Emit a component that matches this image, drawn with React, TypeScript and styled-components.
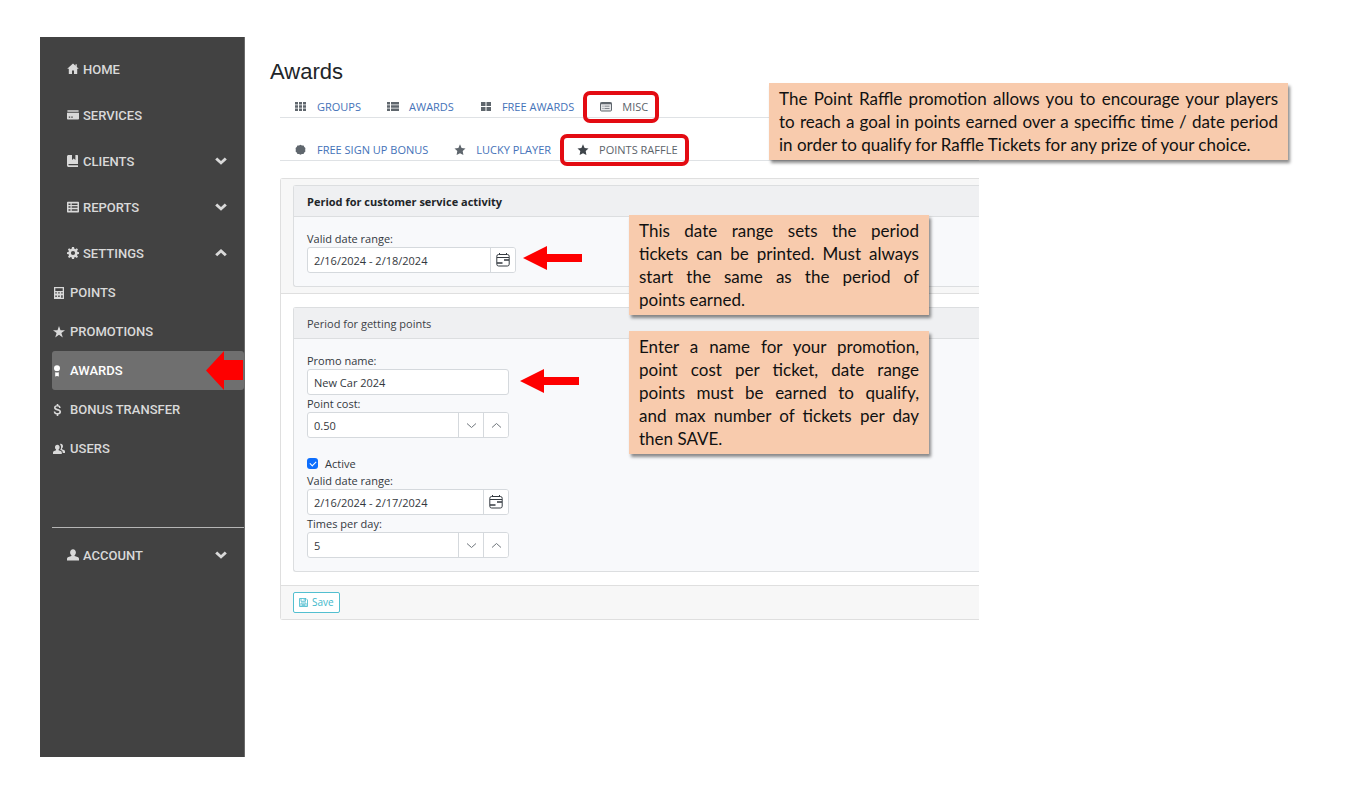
import React from "react";
import styled, { createGlobalStyle, css } from "styled-components";

const GlobalStyle = createGlobalStyle`
  *, *::before, *::after { box-sizing: border-box; }
  body {
    margin: 0;
    background: #fff;
    color: #33383d;
    font-family: "Open Sans", "Noto Sans", sans-serif;
    font-size: 11px;
    line-height: 17px;
  }
  ul { list-style: none; margin: 0; padding: 0; }
  a { color: inherit; text-decoration: none; }
  button, input { font: inherit; color: inherit; }
`;

const Page = styled.div`
  position: relative;
  display: grid;
  grid-template-columns: 205px minmax(0, 734fr) minmax(0, 342fr);
  padding: 37px 40px;
  min-height: 100vh;
`;

/* Sidebar */

const Sidebar = styled.nav`
  background: #424242;
  color: #d9d9d9;
  padding: 13px 0 13px 12px;
  font-family: Roboto, sans-serif;
  font-weight: 500;
  font-size: 13px;
  border-right: 1px solid #6a6a6a;
`;

const MainList = styled.ul`
  display: grid;
  gap: 8px;
`;

const SubList = styled.ul`
  padding-top: 1px;
`;

const MainLink = styled.a`
  display: flex;
  align-items: center;
  gap: 4px;
  height: 38px;
  padding: 0 17px 0 15px;
`;

const SubLink = styled.a<{ $active?: boolean }>`
  display: flex;
  align-items: center;
  gap: 5px;
  height: 39px;
  padding-left: 1px;
  border-radius: 3px;
  ${(p) => p.$active && css`background: #6f6f6f; color: #fff;`}
`;

const LinkText = styled.span`
  flex: 1;
`;

const Divider = styled.hr`
  margin: 59px 0 8px;
  border: 0;
  border-top: 1px solid #b5b5b5;
`;

/* Content */

const Main = styled.main`
  min-width: 0;
  padding: 20px 0 0 35px;
`;

const Title = styled.h1`
  margin: 0 0 9px -10px;
  font: 400 22px/30px "Liberation Sans", Arial, sans-serif;
  color: #212529;
`;

const Tabs = styled.ul`
  display: flex;
  height: 22px;
  margin-bottom: 21px;
  border-bottom: 1px solid #dfe2e5;
`;

const TabLink = styled.a<{ $current?: boolean; $dark?: boolean }>`
  position: relative;
  display: flex;
  align-items: center;
  gap: 10px;
  height: 21px;
  padding: 0 11px 0 15px;
  white-space: nowrap;
  color: ${(p) => (p.$current ? "#5c636a" : "#4472b8")};
  svg { color: ${(p) => (p.$dark ? "#3f454b" : "#5f666d")}; }
  ${(p) =>
    p.$current &&
    css`
      &::after {
        content: "";
        position: absolute;
        inset: -5px 0 -6px -2px;
        border: 4px solid #e30b12;
        border-radius: 7px;
      }
    `}
`;

const Panel = styled.form`
  margin-top: -4px;
  border: 1px solid #dfdfdf;
  border-right: 0;
  border-radius: 3px 0 0 3px;
`;

const PanelBar = styled.div<{ $at: "top" | "bottom" }>`
  background: #f7f7f7;
  padding: 6px 0 6px 12px;
  border: 0 solid #dfdfdf;
  border-width: ${(p) => (p.$at === "top" ? "0 0 1px" : "1px 0 0")};
`;

const PanelBody = styled.div`
  padding: 13px 0 13px 12px;
`;

const Card = styled.fieldset`
  margin: 0;
  padding: 0;
  min-width: 0;
  border: 1px solid #dcdee0;
  border-right: 0;
  border-radius: 3px 0 0 3px;
  background: #f8f9fb;
`;

const CardHeader = styled.h2<{ $bold?: boolean }>`
  margin: 0;
  height: 31px;
  padding: 0 13px;
  font-size: 11px;
  line-height: 31px;
  font-weight: ${(p) => (p.$bold ? 700 : 400)};
  color: ${(p) => (p.$bold ? "#212529" : "#3c4146")};
  background: #eff0f2;
  border-bottom: 1px solid #dcdee0;
`;

const CardBody = styled.div`
  padding: 13px;
`;

const Field = styled.div<{ $wide?: boolean }>`
  width: ${(p) => (p.$wide ? 209 : 202)}px;
`;

const Label = styled.label`
  display: block;
`;

const Group = styled.div`
  display: flex;
  height: 26px;
  border: 1px solid #d5d9dd;
  border-radius: 3px;
  background: #fff;
  overflow: hidden;
`;

const TextInput = styled.input`
  flex: 1;
  min-width: 0;
  padding: 0 6px;
  border: 0;
  background: transparent;
  outline: none;
`;

const GroupButton = styled.button`
  display: grid;
  place-items: center;
  width: 25px;
  padding: 0;
  border: 0;
  border-left: 1px solid #d5d9dd;
  background: #fff;
`;

const CheckRow = styled.label`
  display: flex;
  align-items: center;
  gap: 7px;
  margin-top: 17px;
`;

const CheckBox = styled.input`
  appearance: none;
  margin: 0;
  width: 11px;
  height: 11px;
  border-radius: 3px;
  background: #0d6efd;
  display: grid;
  place-items: center;
  &:checked::after {
    content: "";
    width: 4px;
    height: 6px;
    margin-bottom: 2px;
    border: solid #fff;
    border-width: 0 1px 1px 0;
    transform: rotate(45deg);
  }
`;

const SaveButton = styled.button`
  display: flex;
  align-items: center;
  gap: 4px;
  height: 21px;
  padding: 0 5px;
  border: 1px solid #52bfd0;
  border-radius: 2px;
  background: #fff;
  color: #3fb8cb;
  font-size: 10px;
  line-height: 17px;
`;

/* Notes laid over the page */

const Note = styled.aside<{ $left: number; $top: number; $width: number }>`
  position: absolute;
  left: ${(p) => p.$left}px;
  top: ${(p) => p.$top}px;
  width: ${(p) => p.$width}px;
  padding: 4px 10px;
  background: #f8cbad;
  color: #111;
  font: 400 17px/23px Lato, sans-serif;
  box-shadow: 2px 3px 3px rgba(0, 0, 0, 0.45);
`;

const NoteLine = styled.span`
  display: block;
  white-space: nowrap;
  text-align-last: justify;
  &:last-child { text-align-last: left; }
`;

const Arrow = styled.svg<{ $left: number; $top: number }>`
  position: absolute;
  left: ${(p) => p.$left}px;
  top: ${(p) => p.$top}px;
  fill: #fe0000;
`;

/* Sidebar icons on a 12-unit grid */

type GlyphName =
  | "home" | "card" | "book" | "list" | "cog" | "calculator" | "star"
  | "badge" | "dollar" | "people" | "person" | "down" | "up";

const glyphs: Record<GlyphName, string> = {
  home: "M6 .5L.2 5.800h1.600V11h3.200V7.500h2V11h3.200V5.800h1.600L9.800 4V1.300H8.500v1.500z",
  card: "M.4 1.200h11.200v1.600H.4zM0 3.800h12v6c0 .5-.3.800-.8.800H.8c-.5 0-.8-.3-.8-.8zM1.800 7.500v1.200h1.400V7.500zM4.300 7.500v1.200h1.400V7.500z",
  book: "M1.500 0H5v5l1.700-1.400L8.400 5V0H10c.6 0 1 .4 1 1v8H2c-.4 0-.7.3-.7.600s.3.700.7.700h9V12H1.800C.8 12 0 11.200 0 10.200V1.500C0 .700.700 0 1.500 0z",
  list: "M1 .8h10c.6 0 1 .4 1 1v8.600c0 .6-.4 1-1 1H1c-.6 0-1-.4-1-1V1.800c0-.6.4-1 1-1zM1.500 2.500V4h2V2.500zM4.700 2.500V4h5.800V2.500zM1.500 5.300v1.500h2V5.300zM4.700 5.300v1.500h5.800V5.300zM1.500 8.200v1.500h2V8.200zM4.700 8.200v1.500h5.800V8.200z",
  cog: "M5 0l-.4 1.800-.9.400-1.600-1L.900 2.500l1 1.500-.4.900L0 5.200v1.700l1.600.4.400.9-1 1.500 1.200 1.200 1.500-1 .9.400L5 12h2l.400-1.700.9-.4 1.500 1 1.200-1.200-1-1.500.4-.9L12 6.900V5.200l-1.600-.4-.4-.8 1-1.500-1.200-1.300-1.500 1-.9-.4L7 0zM6 3.900a2.100 2.100 0 1 1 0 4.200 2.100 2.100 0 0 1 0-4.200z",
  calculator: "M1 0h10v12H1zM2.300 1.300v2.700h7.400V1.300zM2.300 5.300v1.300h1.500V5.300zM5.200 5.300v1.300h1.500V5.300zM8.200 5.300v1.300h1.500V5.300zM2.300 8.600v1.500h1.500V8.600zM5.200 8.600v1.500h1.500V8.600zM8.200 8.300v2.400h1.500V8.300z",
  star: "M6 0l1.500 4.300H12L8.400 7l1.400 4.500L6 8.800l-3.800 2.700L3.600 7 0 4.300h4.500z",
  badge: "M4 .3a3 2.900 0 1 1 0 5.800 3 2.900 0 0 1 0-5.800zM2.200 7.200c1.200.4 2.400.4 3.600 0V11.500L4 11l-1.800.5z",
  dollar: "M3.700 0v1.200C2 1.400 1 2.400 1 3.700c0 1.600 1.300 2.300 3 2.700 1.700.4 2.400.7 2.400 1.400 0 .8-.8 1.200-1.900 1.200-1.300 0-2-.5-2.200-1.500H.7c.1 1.800 1.300 2.900 3 3.100V12h1.600v-1.400C7 10.400 8.100 9.400 8.100 7.800c0-1.800-1.500-2.500-3.200-2.900-1.500-.4-2.200-.6-2.200-1.300 0-.6.6-1 1.600-1 1.200 0 1.700.5 1.800 1.300h1.600C7.600 2.400 6.700 1.400 5.300 1.200V0z",
  people: "M4.300 1.700a2.300 2.600 0 0 1 1.300 4.800v.8l2 .7c.8.3 1.200.8 1.200 1.500V11H0V9.500C0 8.800.4 8.300 1.200 8l1.800-.7v-.8a2.300 2.600 0 0 1 1.300-4.800zM7 1c1.500-.6 3 .5 3 2.200 0 1-.4 1.800-1 2.300v.7l1.900.7c.7.300 1.100.8 1.100 1.400V10H9.700V9.400c0-1-.6-1.700-1.500-2.100l-1-.4c.8-1 1.100-2.500.7-3.800C7.700 2.200 7.400 1.500 7 1z",
  person: "M6 .2c1.700 0 2.900 1.500 2.900 3.300 0 1.200-.5 2.200-1.300 2.800v.7l2.900 1c1 .4 1.500 1 1.500 2v1.500H0V10c0-1 .5-1.600 1.500-2l2.900-1v-.7c-.8-.6-1.300-1.600-1.300-2.800C3.100 1.700 4.300.2 6 .2z",
  down: "M2.200 2.500L.200 4.500 6 9.800l5.800-5.300-2-2L6 6.100z",
  up: "M2.200 9.300L.200 7.300 6 2l5.800 5.300-2 2L6 5.700z",
};

const Glyph = ({ name }: { name: GlyphName }) => (
  <svg width="12" height="12" viewBox="0 0 12 12" fill="currentColor" fillRule="evenodd" aria-hidden="true">
    <path d={glyphs[name]} />
  </svg>
);

type TabGlyph = "grid3" | "rows" | "grid2" | "window" | "burst" | "star";

const tabShapes: Record<TabGlyph, React.ReactNode> = {
  grid3: <path d="M0 1h3v2.500H0zM4 1h3v2.500H4zM8 1h3v2.500H8zM0 4.300h3v2.400H0zM4 4.300h3v2.400H4zM8 4.300h3v2.400H8zM0 7.500h3V10H0zM4 7.500h3V10H4zM8 7.500h3V10H8z" />,
  rows: <path d="M0 1h3v2.500H0zM4 1h8v2.500H4zM0 4.300h3v2.400H0zM4 4.300h8v2.400H4zM0 7.500h3V10H0zM4 7.500h8V10H4z" />,
  grid2: <path d="M1 1h4.500v4H1zM6.500 1H11v4H6.500zM1 6h4.500v4H1zM6.500 6H11v4H6.500z" />,
  window: (
    <>
      <rect x=".5" y="1.500" width="11" height="8.500" rx="1" fill="#e4e6e8" stroke="currentColor" />
      <path d="M.5 1.500h11v1.800H.5zM2.500 4.800h1v.8h-1zM4.500 4.800h5v.8h-5zM2.500 7.200h1v.8h-1zM4.500 7.200h5v.8h-5z" />
    </>
  ),
  burst: <path d="M5.500 .8l1.500.6 1.600.1.700 1.400 1.100 1.100L10.200 6l.2 1.500-1.100 1.100-.8 1.300-1.600.2-1.400.7-1.500-.7-1.500-.2-.8-1.300L.600 7.500.8 6 .6 4.100 1.700 3l.7-1.400L4 1.400z" />,
  star: <path d="M6 .3l1.600 3.600 3.900.5-2.800 2.700.7 4L6 9.200l-3.400 1.900.7-4L.5 4.400l3.900-.5z" />,
};

const TabIcon = ({ name }: { name: TabGlyph }) => (
  <svg width="12" height="12" viewBox="0 0 12 12" fill="currentColor" aria-hidden="true">
    {tabShapes[name]}
  </svg>
);

const CalendarIcon = () => (
  <svg width="14" height="14" viewBox="0 0 14 14" fill="none" stroke="#343a40" aria-hidden="true">
    <rect x=".8" y="1.500" width="12.400" height="11.500" rx="1.800" />
    <path d="M1 4.500h12M3.500 0v1.500M10.500 0v1.500" />
    <path d="M8 7h5M1 10h5.500" strokeWidth="1.700" />
  </svg>
);

const Chevron = ({ up }: { up?: boolean }) => (
  <svg width="11" height="7" viewBox="0 0 11 7" fill="none" stroke="#70767c" aria-hidden="true">
    <path d={up ? "M1 5.500l4.500-4 4.500 4" : "M1 1.500l4.500 4 4.500-4"} />
  </svg>
);

const SaveIcon = () => (
  <svg width="9" height="9" viewBox="0 0 9 9" fill="none" stroke="currentColor" strokeWidth=".8" aria-hidden="true">
    <path d="M.5.5h6.500l1.500 1.500v6.500h-8zM2 .5v2.800h4.500V.5M5.200 1v1.500M2 8.500V5h5v3.500M3 6.300h3M3 7.400h3" />
  </svg>
);

/* Data */

const mainItems: { name: GlyphName; text: string; caret?: GlyphName }[] = [
  { name: "home", text: "HOME" },
  { name: "card", text: "SERVICES" },
  { name: "book", text: "CLIENTS", caret: "down" },
  { name: "list", text: "REPORTS", caret: "down" },
  { name: "cog", text: "SETTINGS", caret: "up" },
];

const subItems: { name: GlyphName; text: string; active?: boolean }[] = [
  { name: "calculator", text: "POINTS" },
  { name: "star", text: "PROMOTIONS" },
  { name: "badge", text: "AWARDS", active: true },
  { name: "dollar", text: "BONUS TRANSFER" },
  { name: "people", text: "USERS" },
];

type Tab = { icon: TabGlyph; text: string; current?: boolean; dark?: boolean };

const topTabs: Tab[] = [
  { icon: "grid3", text: "GROUPS" },
  { icon: "rows", text: "AWARDS" },
  { icon: "grid2", text: "FREE AWARDS" },
  { icon: "window", text: "MISC", current: true },
];

const promoTabs: Tab[] = [
  { icon: "burst", text: "FREE SIGN UP BONUS" },
  { icon: "star", text: "LUCKY PLAYER" },
  { icon: "star", text: "POINTS RAFFLE", current: true, dark: true },
];

const notes = [
  {
    left: 769, top: 83, width: 519,
    lines: [
      "The Point Raffle promotion allows you to encourage your players",
      "to reach a goal in points earned over a speciffic time / date period",
      "in order to qualify for Raffle Tickets for any prize of your choice.",
    ],
  },
  {
    left: 629, top: 215, width: 300,
    lines: [
      "This date range sets the period",
      "tickets can be printed. Must always",
      "start the same as the period of",
      "points earned.",
    ],
  },
  {
    left: 629, top: 331, width: 300,
    lines: [
      "Enter a name for your promotion,",
      "point cost per ticket, date range",
      "points must be earned to qualify,",
      "and max number of tickets per day",
      "then SAVE.",
    ],
  },
];

const NavItem = ({ name, text, caret }: { name: GlyphName; text: string; caret?: GlyphName }) => (
  <li>
    <MainLink href="#">
      <Glyph name={name} />
      <LinkText>{text}</LinkText>
      {caret && <Glyph name={caret} />}
    </MainLink>
  </li>
);

const TabBar = ({ tabs }: { tabs: Tab[] }) => (
  <Tabs>
    {tabs.map((t) => (
      <li key={t.text}>
        <TabLink href="#" $current={t.current} $dark={t.dark}>
          <TabIcon name={t.icon} />
          {t.text}
        </TabLink>
      </li>
    ))}
  </Tabs>
);

const DateField = ({ id, value, wide }: { id: string; value: string; wide?: boolean }) => (
  <Field $wide={wide}>
    <Label htmlFor={id}>Valid date range:</Label>
    <Group>
      <TextInput id={id} defaultValue={value} />
      <GroupButton type="button" aria-label="Open calendar"><CalendarIcon /></GroupButton>
    </Group>
  </Field>
);

const NumberField = ({ id, label, value }: { id: string; label: string; value: string }) => (
  <Field>
    <Label htmlFor={id}>{label}</Label>
    <Group>
      <TextInput id={id} defaultValue={value} inputMode="decimal" />
      <GroupButton type="button" aria-label="Decrease"><Chevron /></GroupButton>
      <GroupButton type="button" aria-label="Increase"><Chevron up /></GroupButton>
    </Group>
  </Field>
);

export default function App() {
  return (
    <>
      <GlobalStyle />
      <Page>
        <Sidebar>
          <MainList>
            {mainItems.map((item) => <NavItem key={item.text} {...item} />)}
          </MainList>
          <SubList>
            {subItems.map((item) => (
              <li key={item.text}>
                <SubLink href="#" $active={item.active}>
                  <Glyph name={item.name} />
                  {item.text}
                </SubLink>
              </li>
            ))}
          </SubList>
          <Divider />
          <MainList>
            <NavItem name="person" text="ACCOUNT" caret="down" />
          </MainList>
        </Sidebar>

        <Main>
          <Title>Awards</Title>
          <TabBar tabs={topTabs} />
          <TabBar tabs={promoTabs} />
          <Panel onSubmit={(e) => e.preventDefault()}>
            <PanelBar $at="top">
              <Card>
                <CardHeader $bold>Period for customer service activity</CardHeader>
                <CardBody>
                  <DateField id="service-range" value="2/16/2024 - 2/18/2024" wide />
                </CardBody>
              </Card>
            </PanelBar>
            <PanelBody>
              <Card>
                <CardHeader>Period for getting points</CardHeader>
                <CardBody>
                  <Field>
                    <Label htmlFor="promo-name">Promo name:</Label>
                    <Group>
                      <TextInput id="promo-name" defaultValue="New Car 2024" />
                    </Group>
                  </Field>
                  <NumberField id="point-cost" label="Point cost:" value="0.50" />
                  <CheckRow>
                    <CheckBox type="checkbox" defaultChecked />
                    Active
                  </CheckRow>
                  <DateField id="points-range" value="2/16/2024 - 2/17/2024" />
                  <NumberField id="times-per-day" label="Times per day:" value="5" />
                </CardBody>
              </Card>
            </PanelBody>
            <PanelBar $at="bottom">
              <SaveButton type="submit"><SaveIcon />Save</SaveButton>
            </PanelBar>
          </Panel>
        </Main>

        <Arrow $left={206} $top={351} width="37" height="39" viewBox="0 0 37 39" aria-hidden="true">
          <path d="M0 19.500L18 0v9h19v20H18v10z" />
        </Arrow>
        <Arrow $left={523} $top={246} width="59" height="24" viewBox="0 0 59 24" aria-hidden="true">
          <path d="M0 12L24 0v8h35v8H24v8z" />
        </Arrow>
        <Arrow $left={520} $top={369} width="59" height="24" viewBox="0 0 59 24" aria-hidden="true">
          <path d="M0 12L24 0v8h35v8H24v8z" />
        </Arrow>

        {notes.map((n) => (
          <Note key={n.top} $left={n.left} $top={n.top} $width={n.width}>
            {n.lines.map((line) => <NoteLine key={line}>{line}</NoteLine>)}
          </Note>
        ))}
      </Page>
    </>
  );
}
